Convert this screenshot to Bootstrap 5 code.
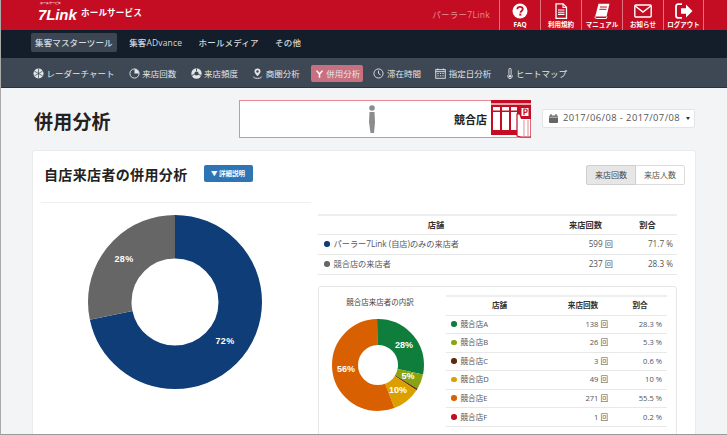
<!DOCTYPE html>
<html lang="ja"><head><meta charset="utf-8"><title>併用分析</title>
<link href="https://cdn.jsdelivr.net/npm/bootstrap@5.3.0/dist/css/bootstrap.min.css" rel="stylesheet">
<style>
html,body{height:100%;overflow:hidden;background:#f3f4f6}
body{font-family:"Open Sans","Noto Sans CJK JP",sans-serif;color:#333;font-size:8.5px}
.frame{height:435px;overflow:hidden;border-left:1px solid #aaa;border-bottom:1px solid #999;background:#f3f4f6}
.topbar{height:30px;background:#c40d23;padding:0 23px 0 0}
.brand-box{margin-left:37px;width:110px;color:#fff;position:relative;height:30px}
.brand-sub{position:absolute;left:2px;top:2px;font:700 3.2px/3.6px "Liberation Sans",sans-serif;white-space:nowrap}
.brand-main{position:absolute;left:0;top:8px;font:italic 900 15px/13px "Liberation Sans",sans-serif;letter-spacing:-.1px}
.brand-kana{position:absolute;left:43px;top:6px;font-size:8.6px;line-height:14px;font-weight:700;letter-spacing:.1px;white-space:nowrap}
.user-name{color:#e58b97;font-size:8.5px;letter-spacing:.3px;margin-right:9px}
.tool{width:41px;height:30px;border-left:1px solid #e4717f;color:#fff;text-decoration:none;font-size:6.5px;font-weight:700;line-height:8px;padding-top:3px;white-space:nowrap}
.tool svg{display:block;height:16px;width:18px;margin:0 auto 2px}
.tool-last{border-right:1px solid #e4717f;width:41px}
.nav-one{height:28px;background:#141d2a;padding:3px 0 0 30px;gap:8.5px;align-items:flex-start}
.nav-one a{color:#d5d9de;text-decoration:none;font-size:8.5px;letter-spacing:.15px;line-height:19px;height:19px;padding:0 4px;border-radius:2px;white-space:nowrap;font-weight:500}
.nav-one a.on{background:#3c4652}
.nav-two{height:30px;background:#3e4854;border-bottom:1px solid #2b333d;padding:7px 0 0 32px;gap:14.3px;align-items:flex-start}
.nav-two a{color:#e3e6e9;text-decoration:none;font-size:8.5px;letter-spacing:0;line-height:17px;height:17px;white-space:nowrap;gap:2.5px;display:flex;align-items:center;border-radius:2px}
.nav-two a.on{background:#c8707f;padding:0 3px 0 4px;margin:0 -4px 0 -3px;gap:2px}
.nav-two a.on svg{width:9px;height:10px}
.nav-two svg{width:11px;height:11px;flex:none}
.nav-two a svg.therm{width:8px}
.main-pad{padding:12px 31px 0 31px}
.head-row{height:50px;align-items:flex-start}
.page-title{font-size:19px;font-weight:700;color:#222;margin:10px 0 0 2px;line-height:24px;letter-spacing:.2px;width:205px}
.banner{width:292px;height:38px;background:#fff;border:1px solid #e88a96;position:relative;padding-right:43px}
.banner-person{position:absolute;left:127px;top:4px}
.banner-store{position:absolute;right:-1px;top:-1px}
.banner-name{font-size:11px;font-weight:700;color:#222;margin-top:12px;line-height:14px}
.date-box{margin:9px 0 0 11px;width:153px;height:19px;background:#fff;border:1px solid #e3e4e6;border-radius:2px;color:#555;font-size:9.4px;letter-spacing:.42px;padding-left:6px;gap:5px;white-space:nowrap}
.date-caret{border-top:3px solid #333;border-left:2.5px solid transparent;border-right:2.5px solid transparent;margin-left:1px}
.sheet{background:#fff;border:1px solid #e9eaec;border-radius:3px;height:300px;padding:14px 10px 0 11px;width:664px}
.sheet-title{font-size:14px;font-weight:700;color:#222;line-height:19px;letter-spacing:.35px;margin-right:16px}
.info-btn{background:#2e75b6;color:#fff;font-size:6.5px;font-weight:700;border:0;border-radius:2px;height:17px;width:49px;padding:0;line-height:17px}
.switch .btn{font-size:8px;padding:0;height:20px;line-height:18px;width:50px;border-color:#dcdcdc;color:#555;background:#fff;border-radius:2px}
.switch .btn.active{background:#e6e6e6;color:#444;border-color:#cfcfcf}
.rule{height:1px;background:#eee;margin:17px 0 0 -3px;width:270px}
.pie-col{width:274px;flex:none;position:relative;height:230px}
.pie-big{position:absolute;left:41px;top:27px;width:180px;height:180px}
.lists{width:359px;padding-top:29px}
.tbl{margin:0;font-size:8.2px;color:#555;border-top:2px solid #eee;table-layout:fixed}
.tbl th,.tbl td{padding:0 5px 0 6px;border-bottom:1px solid #e8e8e8;vertical-align:middle;height:20px;background:transparent;color:#555;white-space:nowrap}
.tbl th{text-align:center;color:#333;font-weight:700;height:19px}
.tbl .num{text-align:right}
.tbl-main .num{padding-right:4px}
.swatch{display:inline-block;width:5.5px;height:5.5px;border-radius:50%;margin-right:4px}
.sub-card{border:1px solid #e6e7e9;border-radius:3px;margin-top:11px;height:160px;padding:8px 9px 0 0;background:#fff}
.sub-chart{width:127px;flex:none;text-align:center;color:#444;font-size:7.5px;line-height:12px;padding:1px 5px 0 0}
.sub-chart svg{display:block;width:96px;height:96px;margin:9px 0 0 11px}
.tbl-sm{font-size:7.6px}
.tbl-sm th,.tbl-sm td{height:18.6px;padding-left:5px}
.tbl-sm th{height:19.5px}
.lbl{fill:#fff;font-weight:700;font-family:"Liberation Sans",sans-serif}
</style></head><body>
<div class="frame">
<header class="topbar d-flex align-items-start">
 <div class="brand-box"><span class="brand-sub">ホールサービス</span><span class="brand-main">7Link</span><span class="brand-kana">ホールサービス</span></div>
 <div class="ms-auto user-name align-self-center">パーラー7Link</div>
 <a class="tool text-center" href="#"><svg viewBox="0 0 18 16"><circle cx="9" cy="8" r="7.5" fill="#fff"/><path d="M6.3 6.2C6.4 4.5 7.6 3.9 9 3.9c1.6 0 2.8.9 2.8 2.2 0 1.9-2.3 1.9-2.3 3.6" fill="none" stroke="#c40d23" stroke-width="1.8"/><rect x="8.3" y="10.6" width="2" height="2" fill="#c40d23"/></svg>FAQ</a>
 <a class="tool text-center" href="#"><svg viewBox="0 0 18 16"><path d="M4 .8h7l3.5 3.5v11H4z" fill="none" stroke="#fff" stroke-width="1.3"/><path d="M11 .8v3.7h3.5M6 7h6.5M6 9.2h6.5M6 11.4h6.5" fill="none" stroke="#fff" stroke-width="1.1"/></svg>利用規約</a>
 <a class="tool text-center" href="#"><svg viewBox="0 0 18 16"><path d="M5.5 .8h11l-3 12.7H2.2z" fill="#fff"/><path d="M2.2 13.5c-.6 1.6.4 2 1.3 2h9.8l.7-2" fill="none" stroke="#fff" stroke-width="1"/><path d="M7 4h7M6.4 6.3h7" stroke="#c40d23" stroke-width="1"/></svg>マニュアル</a>
 <a class="tool text-center" href="#"><svg viewBox="0 0 18 16"><rect x=".8" y="2" width="16.4" height="12" rx="1" fill="none" stroke="#fff" stroke-width="1.4"/><path d="M1.2 3 9 9l7.8-6" fill="none" stroke="#fff" stroke-width="1.4"/></svg>お知らせ</a>
 <a class="tool tool-last text-center" href="#"><svg viewBox="0 0 18 16"><path d="M7 1.2H3a2 2 0 0 0-2 2v9.6a2 2 0 0 0 2 2h4" fill="none" stroke="#fff" stroke-width="1.8"/><path d="M6 5.2h5V1.5L17.5 8 11 14.5v-3.7H6z" fill="#fff"/></svg>ログアウト</a>
</header>
<nav class="nav nav-one flex-nowrap">
 <a class="on" href="#">集客マスターツール</a><a href="#">集客ADvance</a><a href="#">ホールメディア</a><a href="#">その他</a>
</nav>
<nav class="nav nav-two flex-nowrap">
 <a href="#"><svg viewBox="0 0 12 12"><circle cx="6" cy="6" r="5.5" fill="#e3e6e9"/><path d="M6 .8v10.4M1.5 3.4l9 5.2M10.5 3.4l-9 5.2" stroke="#3e4854" stroke-width=".8"/></svg>レーダーチャート</a>
 <a href="#"><svg viewBox="0 0 12 12"><circle cx="6" cy="6" r="5" fill="none" stroke="#e3e6e9"/><path d="M6 6V1a5 5 0 0 1 5 5z" fill="#e3e6e9"/></svg>来店回数</a>
 <a href="#"><svg viewBox="0 0 12 12"><circle cx="6" cy="6" r="5.6" fill="#e3e6e9"/><circle cx="6" cy="6" r="2.3" fill="#3e4854"/><path d="M6 .5v3M11 8 8 7M1 8l3-1" stroke="#3e4854"/></svg>来店頻度</a>
 <a href="#"><svg viewBox="0 0 12 12"><path d="M6 .6a3.3 3.3 0 0 1 3.3 3.3C9.3 6 6 9 6 9S2.7 6 2.7 3.9A3.3 3.3 0 0 1 6 .6z" fill="#e3e6e9"/><circle cx="6" cy="3.8" r="1.3" fill="#3e4854"/><path d="M1.5 9.5c0 1 2 1.8 4.500 1.800s4.500-.8 4.500-1.800" fill="none" stroke="#e3e6e9"/></svg>商圏分析</a>
 <a class="on" href="#"><svg viewBox="0 0 12 12"><path d="M2 1.500 6 6l4-4.500M6 6v5" fill="none" stroke="#fff" stroke-width="2"/></svg>併用分析</a>
 <a href="#"><svg viewBox="0 0 12 12"><circle cx="6" cy="6" r="5" fill="none" stroke="#e3e6e9"/><path d="M6 2.800V6l2.300 1.400" fill="none" stroke="#e3e6e9"/></svg>滞在時間</a>
 <a href="#"><svg viewBox="0 0 12 12"><rect x=".8" y="1.800" width="10.400" height="9.400" fill="none" stroke="#e3e6e9"/><path d="M.8 4h10.400M3 .5v2M9 .5v2M2.500 6h1.500M5.300 6h1.500M8 6h1.500M2.500 8.500h1.500M5.300 8.500h1.500M8 8.500h1.500" stroke="#e3e6e9"/></svg>指定日分析</a>
 <a href="#"><svg class="therm" viewBox="2 0 8 12"><path d="M4.800 1.500a1.200 1.200 0 0 1 2.400 0V7a2.400 2.400 0 1 1-2.400 0z" fill="none" stroke="#e3e6e9"/><circle cx="6" cy="9" r="1.300" fill="#e3e6e9"/></svg>ヒートマップ</a>
</nav>
<main class="main-pad">
 <div class="d-flex head-row">
  <h1 class="page-title">併用分析</h1>
  <div class="banner d-flex justify-content-end">
   <svg class="banner-person" width="10" height="29" viewBox="0 0 10 29"><circle cx="5" cy="3" r="2.800" fill="#8c8c8c"/><path d="M2.500 7h5l.5 10-1 11H3.500L2 17z" fill="#8c8c8c"/></svg>
   <span class="banner-name">競合店</span>
   <svg class="banner-store" width="41" height="38" viewBox="0 0 41 38"><path d="M1 0h40v3H1z" fill="#c40d23"/><path d="M1 3h40v2H1z" fill="#e7a1aa"/><path d="M1 5h28v30H1z" fill="#c40d23"/><g fill="#fff"><rect x="3" y="7" width="7" height="3.500"/><rect x="12" y="7" width="7" height="3.500"/><rect x="21" y="7" width="6" height="3.500"/><rect x="3" y="12" width="7" height="18"/><rect x="12" y="12" width="7" height="18"/><rect x="21" y="12" width="6" height="18"/></g><path d="M27 36V14h14v23H31z" fill="#fff" stroke="#c40d23" stroke-width="1.200"/><path d="M26 5h15v14H31z" fill="#c40d23"/><path d="M34 20v16M38 20v16" stroke="#e7a1aa" stroke-width="1.200"/><rect x="31.500" y="8" width="7" height="8" fill="#fff"/><path d="M34 15v-6h1.500a1.500 1.500 0 0 1 0 3.300H34" fill="none" stroke="#c40d23" stroke-width="1.200"/></svg>
  </div>
  <div class="date-box d-flex align-items-center">
   <svg width="9" height="9" viewBox="0 0 9 9" class="flex-shrink-0"><rect y="1.500" width="9" height="7.500" rx="1" fill="#666"/><path d="M2 0v2M7 0v2" stroke="#666" stroke-width="1.200"/><path d="M0 3.200h9" stroke="#fff" stroke-width=".6"/></svg>
   <span>2017/06/08 - 2017/07/08</span><span class="date-caret"></span>
  </div>
 </div>
 <section class="sheet">
  <div class="d-flex align-items-start">
   <h2 class="sheet-title mb-0">自店来店者の併用分析</h2>
   <button class="btn info-btn" type="button">▼ 詳細説明</button>
   <div class="btn-group switch ms-auto" role="group"><button class="btn active" type="button">来店回数</button><button class="btn" type="button">来店人数</button></div>
  </div>
  <div class="d-flex">
   <div class="pie-col">
    <div class="rule"></div>
    <svg class="pie-big" viewBox="0 0 180 180">
     <g fill="none" stroke-width="43.500" transform="rotate(-90 90 90)">
      <circle cx="90" cy="90" r="65.250" pathLength="100" stroke="#0e3d78" stroke-dasharray="71.700 28.300"/>
      <circle cx="90" cy="90" r="65.250" pathLength="100" stroke="#666" stroke-dasharray="28.300 71.700" stroke-dashoffset="-71.700"/>
     </g>
     <text class="lbl" x="140" y="132" font-size="9" text-anchor="middle" letter-spacing=".4">72%</text>
     <text class="lbl" x="39" y="50" font-size="9" text-anchor="middle" letter-spacing=".4">28%</text>
    </svg>
   </div>
   <div class="lists">
    <table class="table tbl tbl-main">
     <thead><tr><th>店舗</th><th style="width:64px">来店回数</th><th style="width:60px">割合</th></tr></thead>
     <tbody>
      <tr><td><span class="swatch" style="background:#0e3d78"></span>パーラー7Link (自店)のみの来店者</td><td class="num">599 回</td><td class="num">71.7 %</td></tr>
      <tr><td><span class="swatch" style="background:#666"></span>競合店の来店者</td><td class="num">237 回</td><td class="num">28.3 %</td></tr>
     </tbody>
    </table>
    <div class="sub-card d-flex">
     <div class="sub-chart">競合店来店者の内訳
      <svg viewBox="0 0 96 96">
       <g fill="none" stroke-width="26" transform="rotate(-90 48 48)">
        <circle cx="48" cy="48" r="33" pathLength="100" stroke="#0f7d3b" stroke-dasharray="28.300 71.700"/>
        <circle cx="48" cy="48" r="33" pathLength="100" stroke="#8aa312" stroke-dasharray="5.300 94.700" stroke-dashoffset="-28.300"/>
        <circle cx="48" cy="48" r="33" pathLength="100" stroke="#5c2c0a" stroke-dasharray=".6 99.400" stroke-dashoffset="-33.600"/>
        <circle cx="48" cy="48" r="33" pathLength="100" stroke="#dc9f00" stroke-dasharray="10 90" stroke-dashoffset="-34.200"/>
        <circle cx="48" cy="48" r="33" pathLength="100" stroke="#d96000" stroke-dasharray="55.500 44.500" stroke-dashoffset="-44.200"/>
        <circle cx="48" cy="48" r="33" pathLength="100" stroke="#c40d23" stroke-dasharray=".3 99.700" stroke-dashoffset="-99.700"/>
       </g>
       <text class="lbl" x="74" y="31" font-size="9" text-anchor="middle">28%</text>
       <text class="lbl" x="78" y="62" font-size="9" text-anchor="middle">5%</text>
       <text class="lbl" x="68" y="76" font-size="9" text-anchor="middle">10%</text>
       <text class="lbl" x="16" y="55" font-size="9" text-anchor="middle">56%</text>
      </svg>
     </div>
     <div class="flex-grow-1">
      <table class="table tbl tbl-sm">
       <thead><tr><th>店舗</th><th style="width:60px">来店回数</th><th style="width:54px">割合</th></tr></thead>
       <tbody>
        <tr><td><span class="swatch" style="background:#0f7d3b"></span>競合店A</td><td class="num">138 回</td><td class="num">28.3 %</td></tr>
        <tr><td><span class="swatch" style="background:#8aa312"></span>競合店B</td><td class="num">26 回</td><td class="num">5.3 %</td></tr>
        <tr><td><span class="swatch" style="background:#5c2c0a"></span>競合店C</td><td class="num">3 回</td><td class="num">0.6 %</td></tr>
        <tr><td><span class="swatch" style="background:#dc9f00"></span>競合店D</td><td class="num">49 回</td><td class="num">10 %</td></tr>
        <tr><td><span class="swatch" style="background:#d96000"></span>競合店E</td><td class="num">271 回</td><td class="num">55.5 %</td></tr>
        <tr><td><span class="swatch" style="background:#c40d23"></span>競合店F</td><td class="num">1 回</td><td class="num">0.2 %</td></tr>
       </tbody>
      </table>
     </div>
    </div>
   </div>
  </div>
 </section>
</main>
</div>
<script src="https://cdn.jsdelivr.net/npm/bootstrap@5.3.0/dist/js/bootstrap.bundle.min.js"></script>
</body></html>
